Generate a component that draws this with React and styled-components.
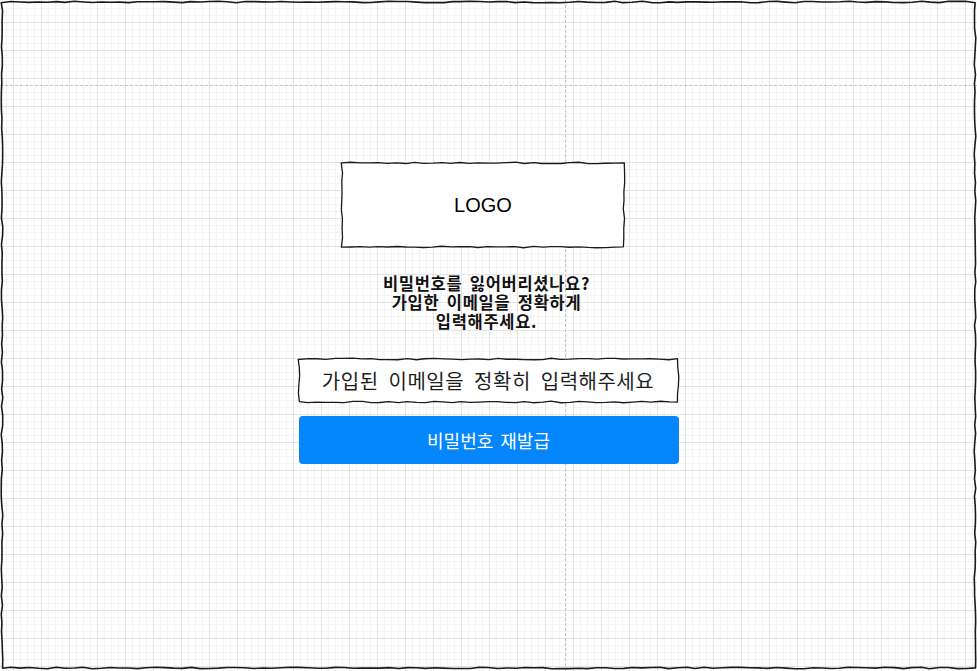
import React from "react";
import styled, { createGlobalStyle } from "styled-components";

const GlobalStyle = createGlobalStyle`
  html, body {
    margin: 0;
    padding: 0;
    background: #fff;
  }
  body {
    font-family: "Noto Sans CJK KR", "Noto Sans", sans-serif;
    color: #111;
  }
`;

// small seeded random so the wobble is the same every render
const seeded = (seed) => {
  let s = seed;
  return () => {
    s = (s * 16807) % 2147483647;
    return (s - 1) / 2147483646;
  };
};

const sketchPath = (w, h, seed, amp = 0.8) => {
  const rnd = seeded(seed);
  const j = () => (rnd() - 0.5) * 2 * amp;
  const pts = [];
  const edge = (x1, y1, x2, y2) => {
    const len = Math.hypot(x2 - x1, y2 - y1);
    const n = Math.max(2, Math.round(len / 9));
    for (let i = 0; i < n; i++) {
      const t = i / n;
      pts.push([x1 + (x2 - x1) * t + j(), y1 + (y2 - y1) * t + j()]);
    }
  };
  edge(0, 0, w, 0);
  edge(w, 0, w, h);
  edge(w, h, 0, h);
  edge(0, h, 0, 0);
  return (
    pts.map((p, i) => `${i ? "L" : "M"}${p[0].toFixed(2)} ${p[1].toFixed(2)}`).join(" ") + " Z"
  );
};

const SketchBorder = ({ w, h, seed, width = 1.3 }) => (
  <BorderSvg width={w} height={h} viewBox={`0 0 ${w} ${h}`}>
    <path d={sketchPath(w, h, seed)} fill="none" stroke="#1a1a1a" strokeWidth={width} strokeLinejoin="round" />
  </BorderSvg>
);

const Canvas = styled.div`
  position: relative;
  width: 977px;
  height: 671px;
  overflow: hidden;
  background-color: #fff;
  background-image: linear-gradient(to right, #e4e4e4 1px, transparent 1px),
    linear-gradient(to bottom, #e4e4e4 1px, transparent 1px),
    linear-gradient(to right, #f4f4f4 1px, transparent 1px),
    linear-gradient(to bottom, #f4f4f4 1px, transparent 1px);
  background-size: 28px 28px, 28px 28px, 7px 7px, 7px 7px;
  background-position: 13px 22px, 13px 22px, 6px 1px, 6px 1px;
`;

const FrameLayer = styled.div`
  position: absolute;
  left: 2px;
  top: 2px;
  width: 973px;
  height: 666px;
  pointer-events: none;
`;

const GuideV = styled.div`
  position: absolute;
  top: 0;
  bottom: 0;
  left: ${(p) => p.$x}px;
  border-left: 1px dashed #c4c4c4;
`;

const GuideH = styled.div`
  position: absolute;
  left: 0;
  right: 0;
  top: ${(p) => p.$y}px;
  border-top: 1px dashed #c4c4c4;
`;

const BorderSvg = styled.svg`
  position: absolute;
  left: 0;
  top: 0;
  overflow: visible;
  pointer-events: none;
`;

const Content = styled.main`
  position: relative;
  display: flex;
  flex-direction: column;
  align-items: center;
  padding-top: 163px;
`;

const LogoBox = styled.div`
  position: relative;
  width: 282px;
  height: 84px;
  margin-right: 11px;
  display: flex;
  align-items: center;
  justify-content: center;
  background: #fff;
  font-family: "Liberation Sans", Arial, sans-serif;
  font-size: 20px;
  color: #000;
`;

const Title = styled.h2`
  margin: 27px 4px 0 0;
  display: flex;
  flex-direction: column;
  align-items: center;
  font-size: 16.5px;
  font-weight: 700;
  color: #111;
`;

const TitleLine = styled.span`
  display: block;
  height: 19px;
  line-height: 19px;
  letter-spacing: 0.7px;
  word-spacing: 3px;
  white-space: nowrap;
`;

const Field = styled.div`
  position: relative;
  width: 379px;
  height: 43px;
  margin-top: 28px;
  margin-right: 1px;
  background: #fff;
  display: flex;
  align-items: center;
  justify-content: center;
  font-size: 20px;
  letter-spacing: 0.5px;
  word-spacing: 5px;
  color: #1e1e1e;
`;

const Submit = styled.button`
  width: 380px;
  height: 48px;
  margin-top: 14px;
  border: none;
  border-radius: 4px;
  background: #0586fc;
  color: #fff;
  font-family: "Noto Sans CJK KR", "Noto Sans", sans-serif;
  font-size: 18px;
  word-spacing: 3px;
  cursor: pointer;
`;

export default function App() {
  return (
    <>
      <GlobalStyle />
      <Canvas>
        <GuideV $x={565} />
        <GuideH $y={85} />
        <Content>
          <LogoBox>
            <SketchBorder w={282} h={84} seed={11} />
            LOGO
          </LogoBox>
          <Title>
            <TitleLine>비밀번호를 잃어버리셨나요?</TitleLine>
            <TitleLine>가입한 이메일을 정확하게</TitleLine>
            <TitleLine>입력해주세요.</TitleLine>
          </Title>
          <Field>
            <SketchBorder w={379} h={43} seed={29} />
            가입된 이메일을 정확히 입력해주세요
          </Field>
          <Submit>비밀번호 재발급</Submit>
        </Content>
        <FrameLayer>
          <SketchBorder w={973} h={666} seed={7} width={1.6} />
        </FrameLayer>
      </Canvas>
    </>
  );
}
